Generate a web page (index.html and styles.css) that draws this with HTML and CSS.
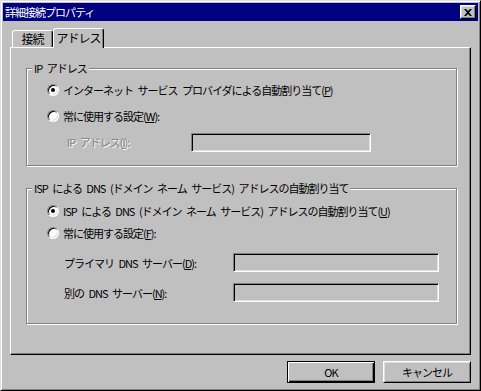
FILE: index.html
```html
<!DOCTYPE html>
<html lang="ja">
<head>
    <meta charset="UTF-8">
    <title>詳細接続プロパティ</title>
    <link rel="stylesheet" href="styles.css">
</head>
<body>
    <div class="window">
        <div class="titlebar">
            <span class="title">詳細接続プロパティ</span>
            <button class="close-btn" aria-label="閉じる">
                <svg width="8" height="7" viewBox="0 0 8 7"><path d="M0 0h2l2 2 2-2h2L5 3.5 8 7H6L4 5 2 7H0l3-3.5z" fill="#000"/></svg>
            </button>
        </div>

        <div class="body">
            <!-- Pestañas -->
            <div class="tabs">
                <div class="tab">接続</div>
                <div class="tab active">アドレス</div>
            </div>

            <div class="panel">
                <!-- IP -->
                <div class="group group-ip">
                    <div class="group-title">IP アドレス</div>
                    <div class="row row-ip">
                        <span class="radio checked"></span>
                        <span>インターネット サービス プロバイダによる自動割り当て(<u>P</u>)</span>
                    </div>
                    <div class="row row-ip">
                        <span class="radio"></span>
                        <span>常に使用する設定(<u>W</u>):</span>
                    </div>
                    <div class="row row-ip">
                        <span class="field-label ip-label disabled">IP アドレス(<u>I</u>):</span>
                        <span class="input ip-input"></span>
                    </div>
                </div>

                <!-- DNS -->
                <div class="group group-dns">
                    <div class="group-title">ISP による DNS (ドメイン ネーム サービス) アドレスの自動割り当て</div>
                    <div class="row row-dns">
                        <span class="radio checked"></span>
                        <span>ISP による DNS (ドメイン ネーム サービス) アドレスの自動割り当て(<u>U</u>)</span>
                    </div>
                    <div class="row row-dns">
                        <span class="radio"></span>
                        <span>常に使用する設定(<u>F</u>):</span>
                    </div>
                    <div class="row row-field first-field">
                        <span class="field-label dns-label">プライマリ DNS サーバー(<u>D</u>):</span>
                        <span class="input dns-input"></span>
                    </div>
                    <div class="row row-field">
                        <span class="field-label dns-label">別の DNS サーバー(<u>N</u>):</span>
                        <span class="input dns-input"></span>
                    </div>
                </div>
            </div>

            <div class="buttons">
                <button class="btn default">OK</button>
                <button class="btn">キャンセル</button>
            </div>
        </div>
    </div>
</body>
</html>
```

FILE: styles.css
```css
/* Estilos generales */
* {
    margin: 0;
    padding: 0;
    box-sizing: border-box;
}

body {
    font-family: "Noto Sans CJK JP", "Liberation Sans", sans-serif;
    font-size: 11px;
    letter-spacing: -1px;
    word-spacing: 3px;
    color: #000;
    background-color: #c0c0c0;
}

u {
    text-decoration: underline;
    text-underline-offset: 1px;
}

/* Ventana */
.window {
    width: 481px;
    height: 391px;
    padding: 2px;
    background-color: #c0c0c0;
    border: 1px solid;
    border-color: #dfdfdf #000 #000 #dfdfdf;
    box-shadow: inset 1px 1px #fff, inset -1px -1px #808080;
}

.titlebar {
    display: flex;
    align-items: center;
    height: 18px;
    padding: 0 2px;
    background-color: #000080;
    color: #fff;
}

.title {
    line-height: 18px;
}

.close-btn {
    display: flex;
    align-items: center;
    justify-content: center;
    margin-left: auto;
    width: 16px;
    height: 14px;
    background-color: #c0c0c0;
    border: 1px solid;
    border-color: #fff #000 #000 #fff;
    box-shadow: inset -1px -1px #808080, inset 1px 1px #dfdfdf;
}

.body {
    padding: 7px 7px 0 7px;
}

/* Pestañas */
.tabs {
    display: flex;
    align-items: flex-end;
    height: 19px;
    margin-left: 2px;
}

.tab {
    width: 41px;
    height: 17px;
    line-height: 16px;
    text-align: center;
    font-size: 12px;
    border: 1px solid;
    border-color: #fff #000 transparent #fff;
    border-bottom: none;
    border-radius: 3px 3px 0 0;
    box-shadow: inset -1px 0 #808080;
}

.tab.active {
    position: relative;
    z-index: 1;
    width: 51px;
    height: 20px;
    line-height: 18px;
    margin-bottom: -1px;
    background-color: #c0c0c0;
}

.panel {
    height: 308px;
    padding: 0 13px 0 15px;
    border: 1px solid;
    border-color: #fff #000 #000 #fff;
    box-shadow: inset -1px -1px #808080;
}

/* Grupos */
.group {
    border: 1px solid #808080;
    box-shadow: inset 1px 1px #fff, 1px 1px 0 #fff;
}

.group-ip {
    margin-top: 20px;
    padding-bottom: 10px;
}

.group-dns {
    margin-top: 22px;
    padding-bottom: 21px;
}

.group-title {
    display: table;
    margin: -8px 0 0 5px;
    padding: 0 2px;
    line-height: 14px;
    background-color: #c0c0c0;
}

.row {
    display: flex;
    align-items: center;
    gap: 4px;
    padding-left: 20px;
}

.row-ip {
    height: 26px;
}

.group-ip .group-title + .row {
    margin-top: 2px;
}

.row-dns {
    height: 22px;
}

.group-dns .group-title + .row {
    margin-top: 5px;
}

.row-field {
    height: 19px;
    margin-top: 11px;
    padding-left: 37px;
    gap: 0;
}

.row-field.first-field {
    margin-top: 9px;
}

.field-label {
    flex: none;
}

.ip-label {
    width: 120px;
    margin-left: 20px;
}

.dns-label {
    width: 169px;
}

.disabled {
    color: #808080;
    text-shadow: 1px 1px 0 #fff;
}

/* Controles */
.radio {
    display: flex;
    align-items: center;
    justify-content: center;
    flex: none;
    width: 12px;
    height: 12px;
    border-radius: 50%;
    background-color: #fff;
    border: 1px solid;
    border-color: #808080 #fff #fff #808080;
    box-shadow: inset 1px 1px #000, inset -1px -1px #dfdfdf;
}

.radio.checked::after {
    content: "";
    width: 4px;
    height: 4px;
    border-radius: 50%;
    background-color: #000;
}

.input {
    display: block;
    height: 19px;
    background-color: #c0c0c0;
    border: 1px solid;
    border-color: #808080 #fff #fff #808080;
    box-shadow: inset 1px 1px #000, inset -1px -1px #dfdfdf;
}

.ip-input {
    width: 180px;
}

.dns-input {
    width: 206px;
}

/* Botones */
.buttons {
    display: flex;
    justify-content: flex-end;
    gap: 8px;
    margin-top: 6px;
}

.btn {
    width: 88px;
    height: 22px;
    font-family: inherit;
    font-size: 11px;
    letter-spacing: inherit;
    word-spacing: inherit;
    color: #000;
    background-color: #c0c0c0;
    border: 1px solid;
    border-color: #fff #000 #000 #fff;
    box-shadow: inset 1px 1px #dfdfdf, inset -1px -1px #808080;
}

.btn.default {
    border-color: #000;
    box-shadow: inset 1px 1px #fff, inset -1px -1px #000, inset -2px -2px #808080;
}
```
